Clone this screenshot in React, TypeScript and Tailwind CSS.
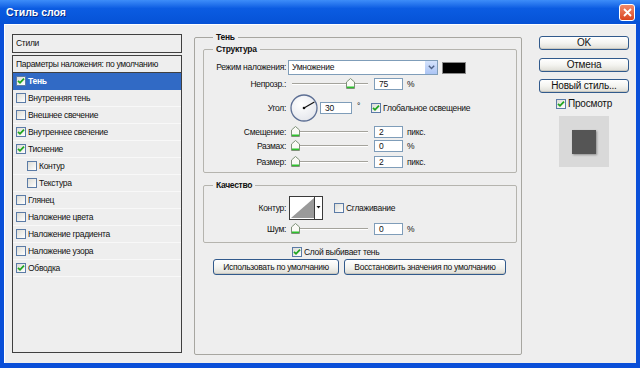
import React from 'react';

const Check: React.FC<{ on?: boolean }> = ({ on }) => (
  <span className="flex h-[10px] w-[10px] shrink-0 items-center justify-center border border-[#5B7BA6] bg-gradient-to-br from-[#DCDCD6] to-white">
    {on && (
      <svg width="8" height="8" viewBox="0 0 8 8">
        <path d="M1 3.8 L3 5.8 L7 1.6" fill="none" stroke="#1FA51F" strokeWidth="1.8" />
      </svg>
    )}
  </span>
);

const Thumb = () => (
  <svg width="9" height="11" viewBox="0 0 9 11">
    <path d="M0.5 4 L4.5 0.5 L8.5 4 V10.5 H0.5 Z" fill="#FAFAF6" stroke="#7E9178" />
    <rect x="1" y="8.5" width="7" height="1.5" fill="#2CC22C" />
  </svg>
);

// track 292..368, thumb travels with the value
const Slider: React.FC<{ value: number }> = ({ value }) => (
  <div className="relative h-[12px] w-[84px] shrink-0">
    <div className="absolute left-[4px] right-[4px] top-[5px] h-[2px] border-t border-b border-t-[#A4A39C] border-b-white" />
    <div className="absolute top-0" style={{ left: 3 + Math.round((value / 100) * 73) }}>
      <Thumb />
    </div>
  </div>
);

const NumBox: React.FC<{ value: string; w?: string }> = ({ value, w = 'w-[29px]' }) => (
  <div className={`${w} flex h-[12px] shrink-0 items-center border border-[#7F9DB9] bg-white pl-[4px]`}>{value}</div>
);

const Label: React.FC<{ children: React.ReactNode }> = ({ children }) => (
  <span className="w-[82px] shrink-0 text-right">{children}</span>
);

const XpButton: React.FC<{ children: React.ReactNode; className?: string }> = ({ children, className = '' }) => (
  <div
    className={`flex items-center justify-center rounded-[3px] border border-[#315A8C] bg-gradient-to-b from-white via-[#F4F4F0] to-[#DEDDD6] shadow-[inset_0_-1px_0_#C9C8C0] ${className}`}
  >
    {children}
  </div>
);

const styles: { name: string; on: boolean; indent?: boolean; active?: boolean }[] = [
  { name: 'Тень', on: true, active: true },
  { name: 'Внутренняя тень', on: false },
  { name: 'Внешнее свечение', on: false },
  { name: 'Внутреннее свечение', on: true },
  { name: 'Тиснение', on: true },
  { name: 'Контур', on: false, indent: true },
  { name: 'Текстура', on: false, indent: true },
  { name: 'Глянец', on: false },
  { name: 'Наложение цвета', on: false },
  { name: 'Наложение градиента', on: false },
  { name: 'Наложение узора', on: false },
  { name: 'Обводка', on: true },
];

const App: React.FC = () => {
  return (
    <div className="flex h-[368px] w-[640px] flex-col whitespace-nowrap bg-[#0A4FD8] font-['Liberation_Sans',Arial,sans-serif] text-[8.5px] leading-none tracking-[-0.3px] text-[#111]">
      {/* Title bar */}
      <div className="flex h-[24px] shrink-0 items-center justify-between bg-gradient-to-b from-[#3D8DF9] via-[#0B5CE2] via-35% to-[#0652D6] pl-[6px] pr-[5px]">
        <span className="text-[10.5px] font-bold tracking-normal text-white [text-shadow:1px_1px_0_#0A2F8A]">Стиль слоя</span>
        <div className="flex h-[17px] w-[16px] items-center justify-center rounded-[3px] border border-white bg-gradient-to-b from-[#F08A6B] to-[#D9431C]">
          <svg width="9" height="9" viewBox="0 0 9 9">
            <path d="M1 1 L8 8 M8 1 L1 8" stroke="white" strokeWidth="1.8" />
          </svg>
        </div>
      </div>

      {/* Body */}
      <div className="mx-[4px] mb-[5px] flex flex-1 items-start border-l border-t border-white bg-[#EEEEEE]">
        {/* Styles list */}
        <div className="ml-[7px] mt-[9px] flex h-[319px] w-[170px] flex-col gap-[2px]">
          <div className="flex h-[19px] shrink-0 items-center border border-[#404040] pl-[3px]">Стили</div>
          <div className="flex flex-1 flex-col border border-[#404040]">
            <div className="flex h-[17px] items-center border-b border-[#404040] pl-[3px]">Параметры наложения: по умолчанию</div>
            {styles.map((s) => (
              <div
                key={s.name}
                className={`flex h-[17px] items-center gap-[2px] border-b ${
                  s.active ? 'border-[#316AC5] bg-[#316AC5] font-bold text-white' : 'border-[#F8F8F8]'
                } ${s.indent ? 'pl-[14px]' : 'pl-[3px]'}`}
              >
                <Check on={s.on} />
                <span>{s.name}</span>
              </div>
            ))}
          </div>
        </div>

        {/* Shadow settings */}
        <fieldset className="ml-[12px] mt-[6px] h-[324px] w-[328px] rounded-[2px] border border-[#A7A6A0] pl-[8px]">
          <legend className="ml-[10px] px-[3px] font-bold leading-[12px]">Тень</legend>

          <fieldset className="w-[314px] rounded-[2px] border border-[#B5B4AE] pb-[4px]">
            <legend className="ml-[9px] px-[3px] font-bold leading-[12px]">Структура</legend>
            <div className="mt-[5px] flex h-[15px] items-center gap-[2px]">
              <Label>Режим наложения:</Label>
              <div className="flex h-[15px] w-[150px] items-center border border-[#7F9DB9] bg-white">
                <span className="flex-1 pl-[3px]">Умножение</span>
                <div className="flex h-full w-[12px] items-center justify-center bg-gradient-to-b from-[#D5E3FC] to-[#ABC4F4]">
                  <svg width="7" height="5" viewBox="0 0 7 5">
                    <path d="M0.8 0.8 L3.5 3.6 L6.2 0.8" fill="none" stroke="#4D6185" strokeWidth="1.4" />
                  </svg>
                </div>
              </div>
              <div className="ml-[2px] h-[12px] w-[24px] border border-[#8A8A8A] bg-black" />
            </div>
            <div className="mt-[3px] flex h-[12px] items-center gap-[2px]">
              <Label>Непрозр.:</Label>
              <Slider value={75} />
              <NumBox value="75" />
              <span className="ml-[2px]">%</span>
            </div>
            <div className="mt-[4px] flex h-[28px] items-center gap-[2px]">
              <Label>Угол:</Label>
              <svg width="28" height="28" viewBox="0 0 28 28" className="ml-[2px] shrink-0">
                <defs>
                  <radialGradient id="dial" cx="0.4" cy="0.35" r="0.7">
                    <stop offset="0" stopColor="#FFFFFF" />
                    <stop offset="1" stopColor="#E4E6EC" />
                  </radialGradient>
                </defs>
                <circle cx="14" cy="14" r="13" fill="url(#dial)" stroke="#5D6F94" strokeWidth="1.3" />
                <path d="M14 14 L24.4 8" stroke="#111" strokeWidth="1.2" />
                <circle cx="14" cy="14" r="1.3" fill="#111" />
              </svg>
              <NumBox value="30" w="w-[32px]" />
              <span className="ml-[3px] self-start pt-[8px]">°</span>
              <span className="ml-[9px]">
                <Check on />
              </span>
              <span>Глобальное освещение</span>
            </div>
            {[
              { l: 'Смещение:', v: '2', u: 'пикс.', mt: 'mt-[4px]' },
              { l: 'Размах:', v: '0', u: '%', mt: 'mt-[2px]' },
              { l: 'Размер:', v: '2', u: 'пикс.', mt: 'mt-[4px]' },
            ].map((r) => (
              <div key={r.l} className={`${r.mt} flex h-[12px] items-center gap-[2px]`}>
                <Label>{r.l}</Label>
                <Slider value={0} />
                <NumBox value={r.v} />
                <span className="ml-[2px]">{r.u}</span>
              </div>
            ))}
          </fieldset>

          <fieldset className="mt-[6px] w-[314px] rounded-[2px] border border-[#B5B4AE] pb-[7px]">
            <legend className="ml-[9px] px-[3px] font-bold leading-[12px]">Качество</legend>
            <div className="mt-[5px] flex h-[24px] items-center gap-[2px]">
              <Label>Контур:</Label>
              <svg width="34" height="24" viewBox="0 0 34 24" className="ml-[1px] shrink-0">
                <rect x="0.5" y="0.5" width="33" height="23" fill="white" stroke="#3A3A3A" />
                <path d="M2 22 L25 2 V22 Z" fill="#9A9A9A" />
                <path d="M25.5 1 V23" stroke="#3A3A3A" />
                <path d="M27.5 10 H31.5 L29.5 12.5 Z" fill="#111" />
              </svg>
              <span className="ml-[9px]">
                <Check />
              </span>
              <span>Сглаживание</span>
            </div>
            <div className="mt-[3px] flex h-[12px] items-center gap-[2px]">
              <Label>Шум:</Label>
              <Slider value={0} />
              <NumBox value="0" />
              <span className="ml-[2px]">%</span>
            </div>
          </fieldset>

          <div className="mt-[3px] flex h-[12px] items-center gap-[2px] pl-[89px]">
            <Check on />
            <span>Слой выбивает тень</span>
          </div>
          <div className="mt-[1px] flex gap-[5px] pl-[10px]">
            <XpButton className="h-[16px] w-[126px]">Использовать по умолчанию</XpButton>
            <XpButton className="h-[16px] w-[162px]">Восстановить значения по умолчанию</XpButton>
          </div>
        </fieldset>

        {/* Dialog buttons and preview */}
        <div className="ml-[17px] mt-[11px] flex w-[90px] flex-col items-center text-[10px] tracking-[-0.2px]">
          <XpButton className="h-[14px] w-[90px]">OK</XpButton>
          <XpButton className="mt-[8px] h-[14px] w-[90px]">Отмена</XpButton>
          <XpButton className="mt-[7px] h-[14px] w-[90px]">Новый стиль...</XpButton>
          <div className="mt-[6px] flex h-[10px] items-center gap-[2px]">
            <Check on />
            <span>Просмотр</span>
          </div>
          <div className="mt-[7px] flex h-[51px] w-[50px] items-center justify-center bg-[#D9D9D9]">
            <div className="h-[24px] w-[24px] bg-[#555555] shadow-[1px_1px_2px_rgba(0,0,0,0.35)]" />
          </div>
        </div>
      </div>
    </div>
  );
};

export default App;
